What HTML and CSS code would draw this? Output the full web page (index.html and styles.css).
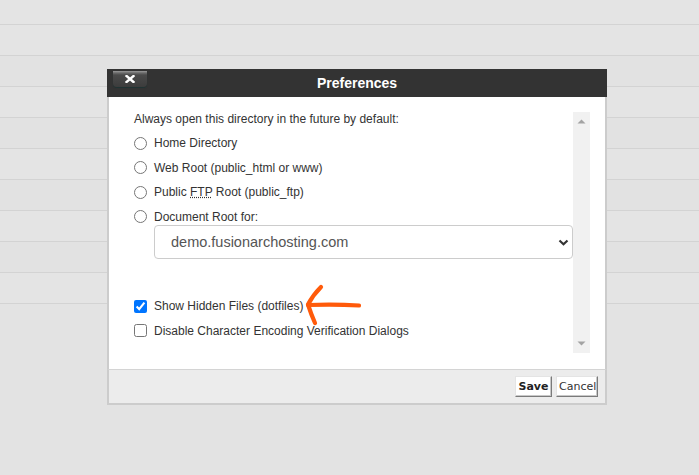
FILE: index.html
```html
<!DOCTYPE html>
<html lang="en">
<head>
<meta charset="utf-8">
<title>Preferences</title>
<link rel="stylesheet" href="styles.css">
</head>
<body>
<div class="rows">
  <div class="row first"></div>
  <div class="row alt"></div>
  <div class="row"></div>
  <div class="row alt"></div>
  <div class="row"></div>
  <div class="row alt"></div>
  <div class="row"></div>
  <div class="row alt"></div>
  <div class="row"></div>
  <div class="row alt"></div>
</div>

<div class="dialog">
  <div class="titlebar">
    <button class="close" aria-label="Close">
      <svg width="10" height="8" viewBox="0 0 10 8"><path d="M1.5 1 L8.5 7 M8.5 1 L1.5 7" stroke="#fff" stroke-width="2.4" stroke-linecap="square"/></svg>
    </button>
    <span class="title">Preferences</span>
  </div>
  <div class="body">
    <div class="content">
      <p class="lead">Always open this directory in the future by default:</p>
      <div class="options">
        <label class="opt"><input type="radio" name="dir"><span>Home Directory</span></label>
        <label class="opt"><input type="radio" name="dir"><span>Web Root (public_html or www)</span></label>
        <label class="opt"><input type="radio" name="dir"><span>Public <abbr title="File Transfer Protocol">FTP</abbr> Root (public_ftp)</span></label>
        <label class="opt"><input type="radio" name="dir"><span>Document Root for:</span></label>
      </div>
      <div class="select-wrap">
        <select class="domain"><option>demo.fusionarchosting.com</option></select>
        <svg class="chev" width="11" height="7" viewBox="0 0 11 7"><path d="M1.5 1.5 L5.5 5.2 L9.5 1.5" fill="none" stroke="#333" stroke-width="2.2"/></svg>
      </div>
      <div class="checks">
        <label class="opt"><input type="checkbox" checked><span>Show Hidden Files (dotfiles)</span></label>
        <label class="opt"><input type="checkbox"><span>Disable Character Encoding Verification Dialogs</span></label>
      </div>
    </div>
    <div class="scrollbar">
      <svg width="9" height="5" viewBox="0 0 9 5"><path d="M0.5 4.5 L4.5 0.5 L8.5 4.5Z" fill="#a3a3a3"/></svg>
      <svg width="9" height="5" viewBox="0 0 9 5"><path d="M0.5 0.5 L4.5 4.5 L8.5 0.5Z" fill="#a3a3a3"/></svg>
    </div>
  </div>
  <div class="footer">
    <button class="btn save">Save</button>
    <button class="btn">Cancel</button>
  </div>
  <svg class="annot" width="70" height="46" viewBox="0 0 70 46">
    <path d="M59 23.5 Q35 22 8 23" fill="none" stroke="#ff5a0a" stroke-width="4.2" stroke-linecap="round"/>
    <path d="M21 5 Q13 13 8 22.5 Q11 32 15 41" fill="none" stroke="#ff5a0a" stroke-width="4.2" stroke-linecap="round" stroke-linejoin="round"/>
  </svg>
</div>
</body>
</html>
```

FILE: styles.css
```css
html, body {
  margin: 0;
  padding: 0;
}
body {
  width: 699px;
  height: 475px;
  background: #e3e3e3;
  font-family: "Liberation Sans", Arial, sans-serif;
  color: #333;
  overflow: hidden;
  position: relative;
}

.rows {
  display: flex;
  flex-direction: column;
}
.row {
  height: 30px;
  border-bottom: 1px solid #d3d3d3;
  background: #e2e2e2;
}
.row.alt {
  background: #e4e4e4;
}
.row.first {
  height: 24px;
  background: #e4e4e4;
}

/* modal dialog overlay */
.dialog {
  position: absolute;
  left: 107px;
  top: 69px;
  width: 500px;
  display: flex;
  flex-direction: column;
}

.titlebar {
  position: relative;
  height: 28px;
  background: #333333;
  display: flex;
  align-items: center;
  justify-content: center;
}
.title {
  color: #fff;
  font-weight: bold;
  font-size: 14px;
  line-height: 28px;
}
.close {
  position: absolute;
  left: 6px;
  top: 2px;
  width: 34px;
  height: 16px;
  padding: 0;
  border: none;
  border-radius: 0 0 4px 4px;
  background: linear-gradient(to bottom, #9a9a9a 0, #6a6a6a 2px, #4a4a4a 4px, #3c3c3c 100%);
  box-shadow: 0 1px 1px #1f3434;
  display: flex;
  align-items: center;
  justify-content: center;
}

.body {
  height: 241px;
  background: #fff;
  border-left: 2px solid #cccccc;
  border-right: 2px solid #cccccc;
  padding: 15px 15px 16px 25px;
  display: flex;
}
.content {
  flex: 1;
  display: flex;
  flex-direction: column;
}
.lead {
  margin: 0;
  font-size: 12px;
  line-height: 15px;
}
.options {
  margin-top: 7px;
  display: flex;
  flex-direction: column;
  gap: 6.5px;
}
.opt {
  height: 18px;
  display: flex;
  align-items: center;
  gap: 7px;
  font-size: 12px;
}
.opt input {
  margin: 0;
  width: 13px;
  height: 13px;
  flex: none;
  accent-color: #0075ff;
}
abbr {
  text-decoration: underline dotted;
}

.select-wrap {
  position: relative;
  margin-left: 20px;
  margin-top: -0.5px;
}
.domain {
  display: block;
  width: 100%;
  height: 34px;
  box-sizing: border-box;
  appearance: none;
  -webkit-appearance: none;
  background: #fff;
  border: 1px solid #cccccc;
  border-radius: 4px;
  padding: 0 0 0 16px;
  font-family: "Liberation Sans", Arial, sans-serif;
  font-size: 14.5px;
  color: #555;
}
.chev {
  position: absolute;
  right: 4px;
  top: 14px;
  pointer-events: none;
}

.checks {
  margin-top: 38px;
  display: flex;
  flex-direction: column;
  gap: 6.5px;
}

.scrollbar {
  width: 17px;
  background: #f1f1f1;
  display: flex;
  flex-direction: column;
  justify-content: space-between;
  align-items: center;
  padding: 7px 0 7px;
  box-sizing: border-box;
}

.footer {
  height: 33px;
  background: #ececec;
  border-top: 1px solid #d4d4d4;
  border-left: 2px solid #cccccc;
  border-right: 2px solid #cccccc;
  border-bottom: 2px solid #cccccc;
  display: flex;
  justify-content: flex-end;
  align-items: center;
  gap: 4px;
  padding-right: 7px;
}
.btn {
  height: 21px;
  box-sizing: border-box;
  padding: 0 2px;
  background: #fff;
  border: 1px solid;
  border-color: #e4e4e4 #7a7a7a #7a7a7a #e4e4e4;
  box-shadow: inset -1px -1px 0 #c8c8c8;
  font-family: "DejaVu Sans", Verdana, sans-serif;
  font-size: 11px;
  color: #222;
}
.btn.save {
  font-weight: bold;
  width: 37px;
}
.btn:not(.save) {
  width: 42px;
  color: #333;
}

/* hand-drawn annotation arrow over the dialog */
.annot {
  position: absolute;
  left: 193px;
  top: 213px;
}
```
